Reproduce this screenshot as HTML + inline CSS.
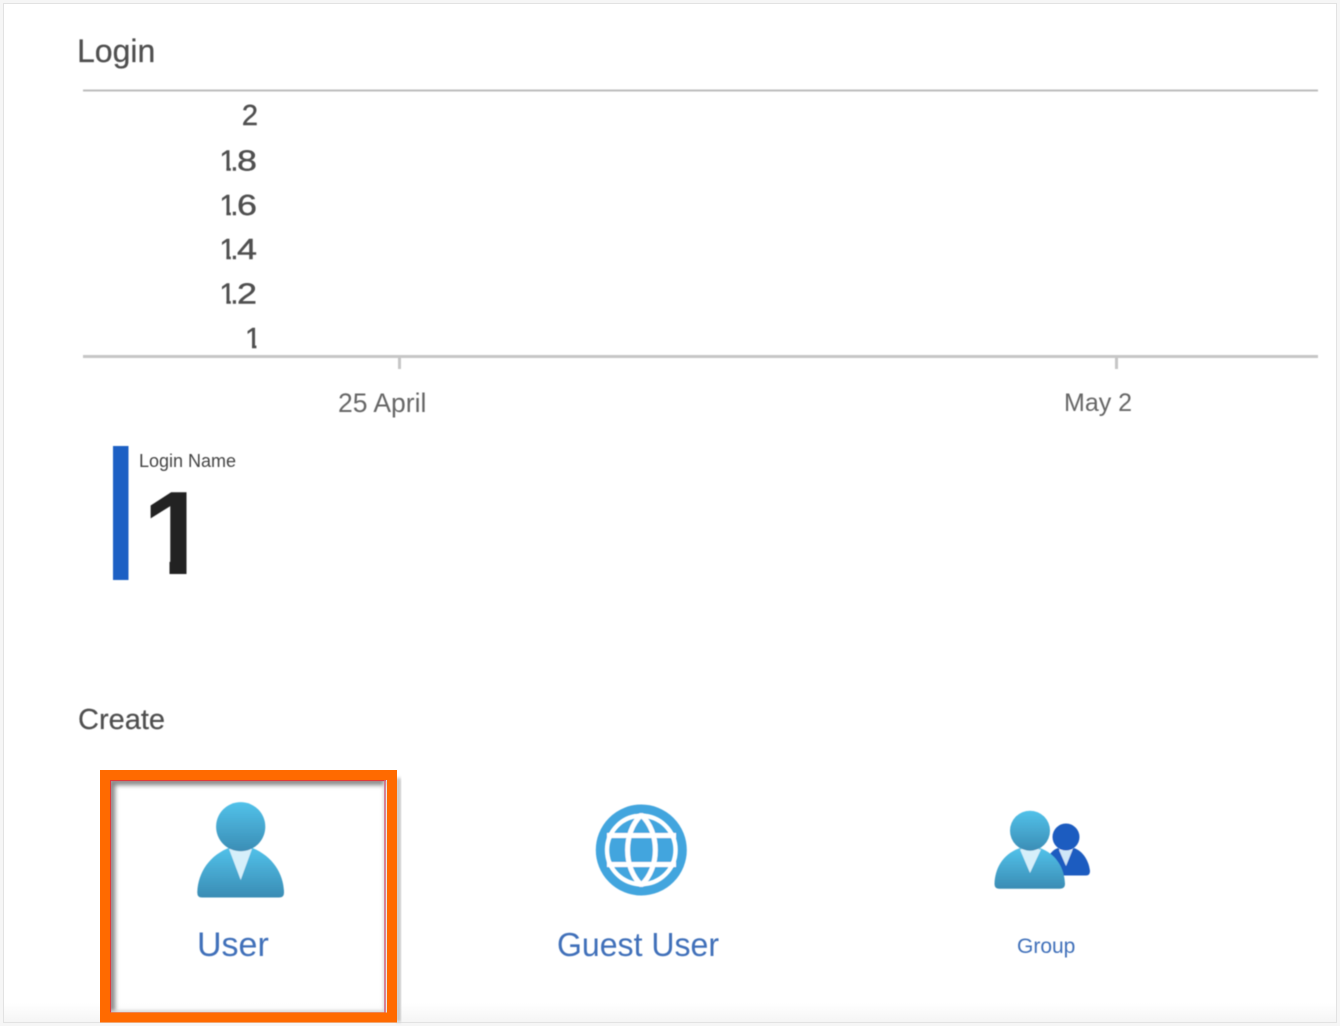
<!DOCTYPE html>
<html lang="en">
<head>
<meta charset="utf-8">
<title>Login</title>
<style>
html,body{margin:0;padding:0;width:1340px;height:1026px;overflow:hidden;background:#fff}
svg{display:block;position:absolute;left:0;top:0}
text{font-family:"Liberation Sans",sans-serif}
</style>
</head>
<body>
<svg width="1340" height="1026" viewBox="0 0 1340 1026" xmlns="http://www.w3.org/2000/svg">
<defs>
<linearGradient id="hd" x1="0" y1="0" x2="0" y2="1"><stop offset="0" stop-color="#52c2ea"/><stop offset="1" stop-color="#3b8db5"/></linearGradient>
<linearGradient id="bd" x1="0" y1="0" x2="0" y2="1"><stop offset="0" stop-color="#52c2ea"/><stop offset="1" stop-color="#3a8cb4"/></linearGradient>
<linearGradient id="ft" x1="0" y1="0" x2="0" y2="1"><stop offset="0" stop-color="#fff"/><stop offset="1" stop-color="#f5f5f5"/></linearGradient>
<filter id="s" x="-10%" y="-10%" width="120%" height="120%"><feGaussianBlur stdDeviation="2.500"/></filter>
<filter id="s2" x="-10%" y="-10%" width="120%" height="120%"><feGaussianBlur stdDeviation="1.500"/></filter>
<filter id="b" x="-5%" y="-5%" width="110%" height="110%"><feGaussianBlur stdDeviation="0.45"/></filter>
<clipPath id="c1"><path d="M210-26H230.800V1H226.400V-4H210Z"/></clipPath>
<clipPath id="c2"><path d="M140 480H186.500V580H169.500V557H140Z"/></clipPath>
</defs>

<rect x="0" y="0" width="1340" height="1026" fill="#f6f6f6"/>
<rect x="3.500" y="3.500" width="1333" height="1019" fill="#fff" stroke="#e2e2e2"/>
<rect x="4" y="1003" width="1332" height="19" fill="url(#ft)"/>

<g filter="url(#b)">
<text x="77" y="62" font-size="32" fill="#4f4f4f" stroke="#4f4f4f" stroke-width="0.25">Login</text>
<rect x="83" y="89.500" width="1235" height="2" fill="#bdbdbd"/>

<g font-size="29" fill="#505050" stroke="#505050" stroke-width="0.4">
<text x="258" y="125" text-anchor="end">2</text>
<g transform="translate(0,170.500)"><text x="219.400" y="0" clip-path="url(#c1)">1</text><text x="230.400" y="0">.</text><text x="237" y="0" textLength="20" lengthAdjust="spacingAndGlyphs">8</text></g>
<g transform="translate(0,214.800)"><text x="219.400" y="0" clip-path="url(#c1)">1</text><text x="230.400" y="0">.</text><text x="237" y="0" textLength="20" lengthAdjust="spacingAndGlyphs">6</text></g>
<g transform="translate(0,259.200)"><text x="219.400" y="0" clip-path="url(#c1)">1</text><text x="230.400" y="0">.</text><text x="237" y="0" textLength="20" lengthAdjust="spacingAndGlyphs">4</text></g>
<g transform="translate(0,303.400)"><text x="219.400" y="0" clip-path="url(#c1)">1</text><text x="230.400" y="0">.</text><text x="237" y="0" textLength="20" lengthAdjust="spacingAndGlyphs">2</text></g>
<g transform="translate(25.600,348.200)"><text x="219.400" y="0" clip-path="url(#c1)">1</text></g>
</g>

<rect x="83" y="355" width="1235" height="3" fill="#c6c6c6"/>
<rect x="398" y="358" width="3" height="11" fill="#c6c6c6"/>
<rect x="1115" y="358" width="3" height="11" fill="#c6c6c6"/>
<text x="338" y="412" font-size="26.500" fill="#666">25 April</text>
<text x="1064" y="411" font-size="25" fill="#666">May 2</text>

<rect x="113" y="446" width="15.500" height="134" fill="#1f60c4"/>
<text x="139" y="467" font-size="18" fill="#444">Login Name</text>
<text x="142.500" y="574" font-size="119" font-weight="700" fill="#222" clip-path="url(#c2)">1</text>

<text x="78" y="729" font-size="29" fill="#505050" stroke="#505050" stroke-width="0.2">Create</text>
</g>

<!-- selection box -->
<path d="M112 1012V782H385" fill="none" stroke="#808080" stroke-width="6" filter="url(#s)"/>
<path d="M385 781V1012H111" fill="none" stroke="#c9c9c9" stroke-width="2.500" filter="url(#s2)"/>
<rect x="396" y="778" width="5" height="244" fill="#c4c4c4" filter="url(#s2)"/>
<path d="M110.500 1013V780.500H386" fill="none" stroke="#e03a3a" stroke-width="1.200"/>
<path d="M385 780V1013H110" fill="none" stroke="#d4607a" stroke-width="1.500"/>
<rect x="105" y="775" width="287" height="242.500" fill="none" stroke="#ff6a00" stroke-width="10"/>

<!-- user icon -->
<g filter="url(#b)">
<path d="M202 897.500Q197 897.500 197.300 892C198 873 209 855 231 847L240.700 858L250 847C272 855 283.500 873 284 892Q284.300 897.500 279 897.500Z" fill="url(#bd)"/>
<path d="M229 849L252 849L240.700 880Z" fill="#d6effa"/>
<circle cx="240.700" cy="826.700" r="24.600" fill="url(#hd)"/>
<text x="197" y="956" font-size="34" fill="#3f70b9">User</text>
</g>

<!-- globe icon -->
<g filter="url(#b)">
<circle cx="641.300" cy="850" r="41" fill="none" stroke="#42a5de" stroke-width="9"/>
<circle cx="641.300" cy="850" r="32" fill="#42a5de"/>
<path d="M641.300 815C623 832 623 868 641.300 885C660 868 660 832 641.300 815Z" fill="none" stroke="#fff" stroke-width="5" stroke-linejoin="bevel"/>
<rect x="607" y="833" width="69" height="5" fill="#fff"/>
<rect x="607" y="862" width="69" height="5" fill="#fff"/>
<text x="557" y="956" font-size="33" fill="#3f70b9" textLength="162" lengthAdjust="spacingAndGlyphs">Guest User</text>
</g>

<!-- group icon -->
<g filter="url(#b)">
<path d="M1047 875.500L1045 862C1049 855 1052 850 1058 848L1066 856L1074 848C1083 851 1089 861 1090 871Q1090 875.500 1086 875.500Z" fill="#1f5cc0"/>
<path d="M1059 850L1072.500 850L1066 866Z" fill="#cfe6f8"/>
<circle cx="1066" cy="837" r="13.500" fill="#1f5cc0"/>
<path d="M999 888.700Q994.500 888.700 994.500 884C995 868 1003 854 1020 848L1030 856L1040 848C1056 854 1064.500 868 1065 884Q1065 888.700 1060 888.700Z" fill="url(#bd)"/>
<path d="M1020 849.500L1041 849.500L1030 873Z" fill="#d6effa"/>
<circle cx="1030" cy="830.700" r="20" fill="url(#hd)"/>
<text x="1017" y="953" font-size="21" fill="#3f70b9">Group</text>
</g>
</svg>
</body>
</html>
